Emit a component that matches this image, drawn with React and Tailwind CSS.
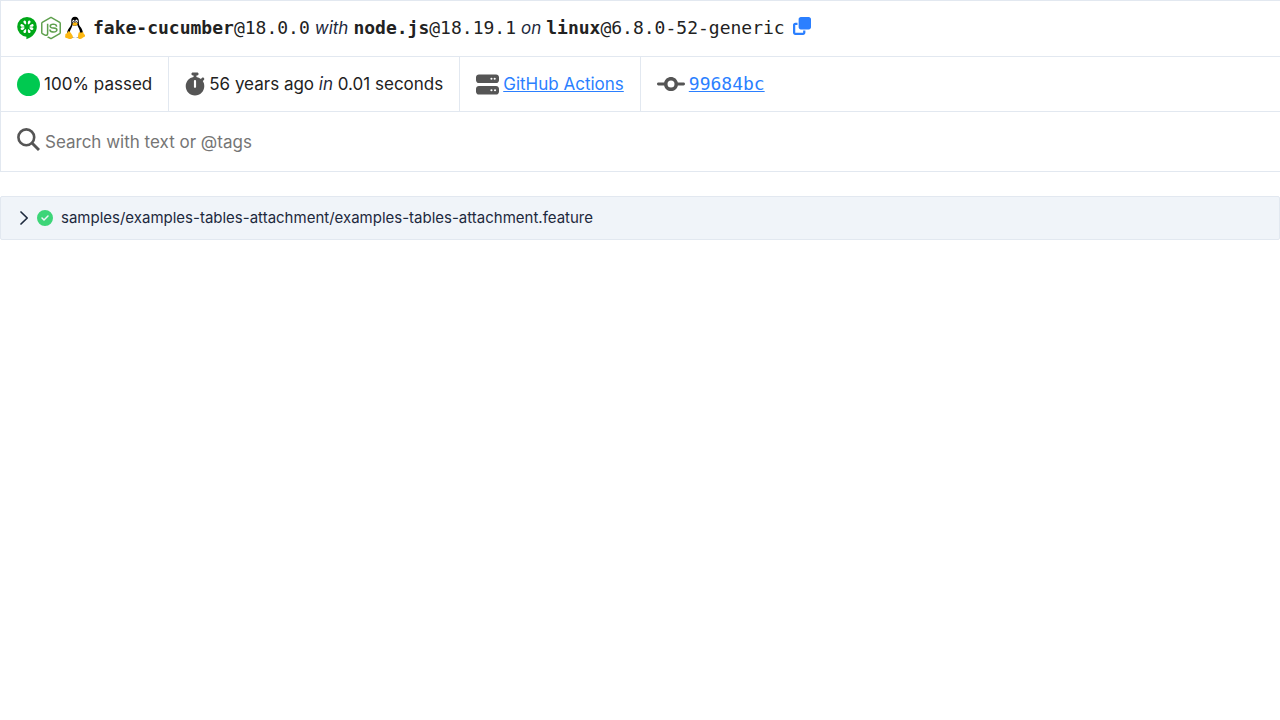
import { FaNodeJs, FaClone, FaStopwatch, FaServer, FaCodeCommit, FaCircleCheck } from 'react-icons/fa6'

const seedAngles = [25, 75, 112, 155, 205, 248, 285, 335]

function Cucumber() {
  return (
    <svg viewBox="0 0 20 24" className="h-6 w-5" role="img" aria-label="fake-cucumber">
      <path fill="#00a818" d="M10 1a9.800 9.800 0 0 1 9.800 9.800c0 5.400-4.300 10.700-10.400 12.400v-2.400A10 10 0 0 1 .2 10.800 9.800 9.800 0 0 1 10 1z" />
      {seedAngles.map((angle) => (
        <path key={angle} fill="#fff" transform={`rotate(${angle} 10 10.800)`} d="M10 8.400c-.8-1-1.300-2-1.300-2.900 0-.9.600-1.500 1.300-1.500s1.300.6 1.300 1.500C11.300 6.400 10.800 7.400 10 8.400z" />
      ))}
    </svg>
  )
}

function Tux() {
  return (
    <svg viewBox="0 0 24 28" className="h-6 w-5" role="img" aria-label="linux">
      <path fill="#000" d="M12 .5c-3.200 0-4.600 2.200-4.500 5.200.1 2.800.5 4.300-1.400 6.800-1.800 2.300-3.900 5.500-3.600 9l4.500 4h10l4.500-4c.3-3.500-1.400-7-3.400-9.300-1.700-2-1.500-3.700-1.500-6.300C16.600 2.500 15 .5 12 .5z" />
      <path fill="#fff" d="M9 10.500c.9 1 4.200 1.200 5.800 0 .6 2.400 3.200 5.200 3.200 9 0 3.800-2.200 6.500-5.500 6.500-4 0-7-3-6.800-6.500.2-3.400 2.900-6 3.300-9z" />
      <ellipse cx="10.200" cy="5.800" rx="1.300" ry="1.800" fill="#fff" />
      <ellipse cx="13.800" cy="5.800" rx="1.500" ry="1.900" fill="#fff" />
      <circle cx="10.600" cy="6.200" r=".7" />
      <circle cx="13.400" cy="6.200" r=".7" />
      <path fill="#fdb813" d="M8.600 8.800 12 7l3.500 1.600c0 1.300-2.100 2.700-3.700 2.700S8.600 9.800 8.600 8.800z" />
      <path fill="#fdb813" d="M4.500 18c1.300 0 2.800 2.600 4.300 4.600 1.500 2.100.2 4.700-2.100 4.600-2.100 0-3.100-1-5.200-1.300-1.500-.1-1.500-1.100-1.200-2.600.2-1.500-.1-2.500 1.500-2.700C3.100 20.400 3.200 18 4.500 18zM17 18.900c1.500 1 3.500.7 4.400-.2 1.100 0 .6 2.200 2 3.200 1.500 1.200.8 2.200-.6 2.900-1.700.8-2.600 2.400-4.700 2.400-2.300 0-2.800-1.600-2.400-3.800.3-1.300.3-3.600 1.300-4.500z" />
    </svg>
  )
}

function SearchIcon() {
  return (
    <svg viewBox="0 0 23 23" className="size-[23px] text-[#555]" fill="none" stroke="currentColor" aria-hidden="true">
      <circle cx="9.300" cy="9.300" r="7.900" strokeWidth="2.600" />
      <path d="m15 15 7 7" strokeWidth="2.900" />
    </svg>
  )
}

function Chevron() {
  return (
    <svg viewBox="0 0 16 16" className="mr-1 size-4" fill="none" stroke="currentColor" strokeWidth="1.700" strokeLinecap="round" strokeLinejoin="round" aria-hidden="true">
      <path d="m4 2 6.200 6L4 14" />
    </svg>
  )
}

function Mono({ children }) {
  return <span className="font-['DejaVu_Sans_Mono',monospace] text-lg leading-6">{children}</span>
}

function Item({ children }) {
  return <li className="flex items-center gap-1 border-r border-slate-200 px-4 py-[15px] last:border-r-0">{children}</li>
}

export default function App() {
  return (
    <main className="font-[Inter,sans-serif] text-[17px] leading-6 text-[#222]">
      <header className="border-t border-l border-slate-200">
        <div className="flex items-start gap-1 border-b border-slate-200 px-4 pt-[15px] pb-4">
          <Cucumber />
          <FaNodeJs className="h-6 w-5 text-[#5fa04e]" aria-label="node.js" />
          <Tux />
          <p className="ml-1 flex items-center gap-[5px] whitespace-nowrap">
            <Mono><strong>fake-cucumber</strong>@18.0.0</Mono>
            <em className="text-slate-800">with</em>
            <Mono><strong>node.js</strong>@18.19.1</Mono>
            <em className="text-slate-800">on</em>
            <Mono><strong>linux</strong>@6.8.0-52-generic</Mono>
          </p>
          <button type="button" aria-label="Copy" className="ml-1 pt-px text-[#2b7fff]">
            <FaClone className="size-[18px]" />
          </button>
        </div>
        <ul className="flex flex-wrap border-b border-slate-200">
          <Item>
            <span className="size-[23px] rounded-full bg-[#00c950]" />
            <span>100% passed</span>
          </Item>
          <Item>
            <FaStopwatch className="h-6 w-5 text-[#555]" />
            <span>56 years ago <em className="text-slate-800">in</em> 0.01 seconds</span>
          </Item>
          <Item>
            <FaServer className="size-[23px] text-[#555]" />
            <a href="#actions" className="text-[#2b7fff] underline">GitHub Actions</a>
          </Item>
          <Item>
            <FaCodeCommit className="h-6 w-7 text-[#555]" />
            <a href="#commit" className="text-[#2b7fff] underline"><Mono>99684bc</Mono></a>
          </Item>
        </ul>
        <label className="flex items-start gap-[5px] border-b border-slate-200 px-4 pt-4 pb-[15px]">
          <SearchIcon />
          <input type="text" aria-label="Search" placeholder="Search with text or @tags" className="h-7 flex-1 outline-none placeholder:text-[#757575]" />
        </label>
      </header>
      <section className="mt-6 rounded-xs border border-slate-200 bg-[#f0f4f9]">
        <button type="button" aria-expanded="false" className="flex w-full items-center px-4 py-[9px] text-[15px] leading-6 text-slate-800">
          <Chevron />
          <FaCircleCheck className="mr-2 size-4 text-[#3dd578]" />
          <span>samples/examples-tables-attachment/examples-tables-attachment.feature</span>
        </button>
      </section>
    </main>
  )
}
